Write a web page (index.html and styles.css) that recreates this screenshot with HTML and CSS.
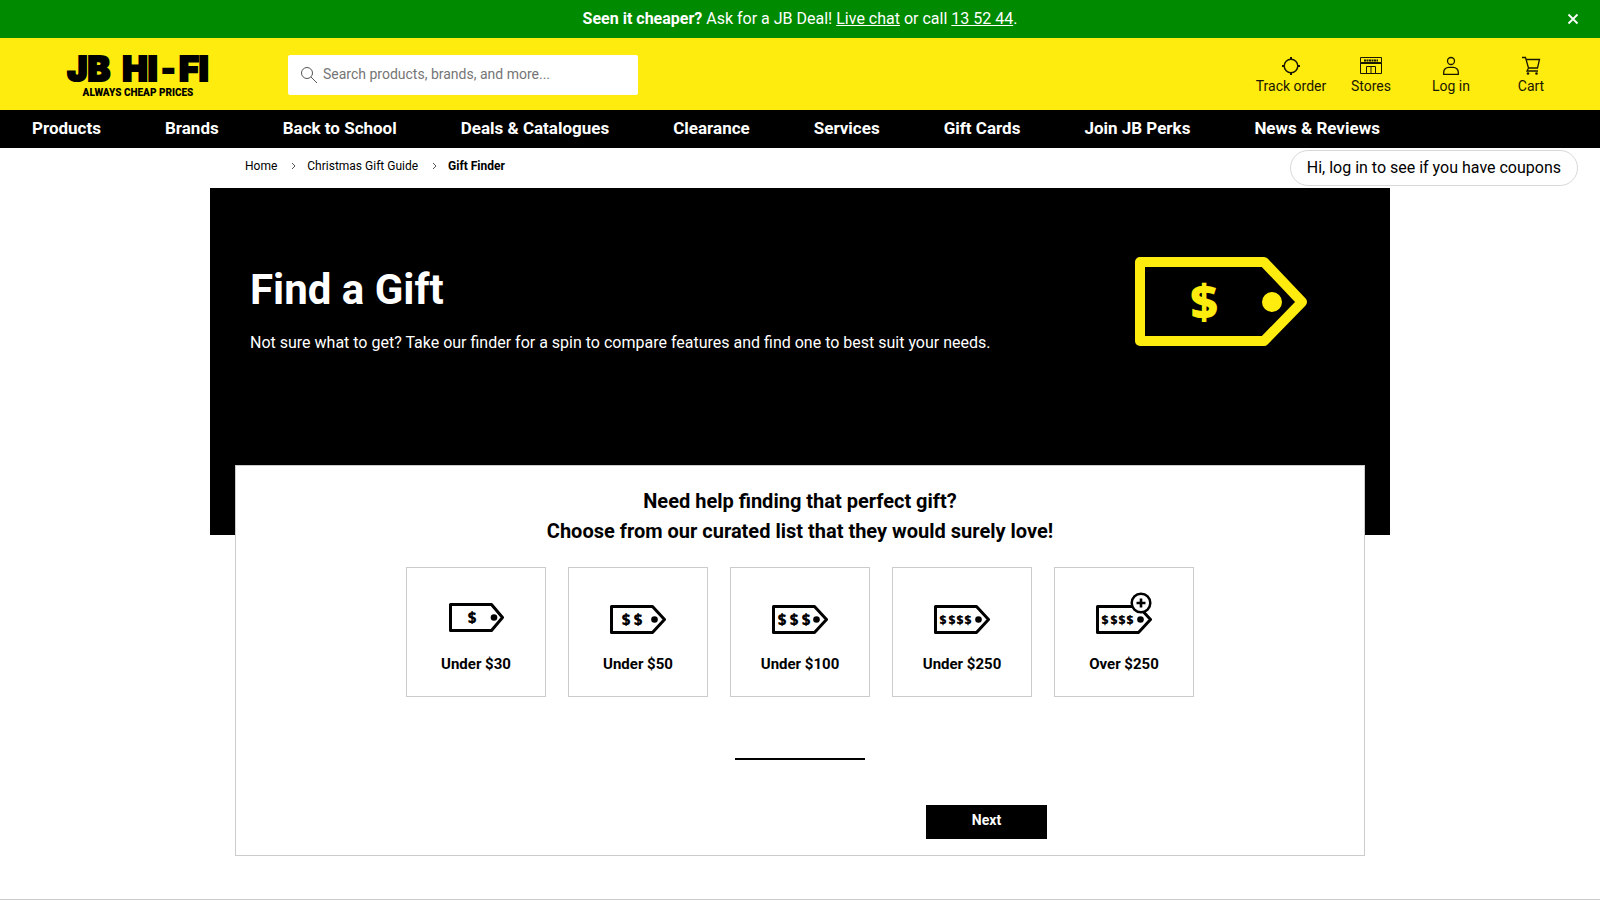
FILE: index.html
```html
<!DOCTYPE html>
<html lang="en">
<head>
    <meta charset="UTF-8">
    <meta name="viewport" content="width=device-width, initial-scale=1">
    <title>Gift Finder | JB Hi-Fi</title>
    <link rel="stylesheet" href="styles.css">
</head>
<body>
    <div class="promo">
        <p class="promo-text"><strong>Seen it cheaper?</strong> Ask for a JB Deal! <a href="#">Live chat</a> or call <a href="tel:135244">13 52 44</a>.</p>
        <button class="promo-close" type="button" aria-label="Close">
            <svg width="12" height="12" viewBox="0 0 12 12"><path d="M1.500 1.500l9 9M10.500 1.500l-9 9" fill="none" stroke="#fff" stroke-width="1.800"/></svg>
        </button>
    </div>

    <header class="header">
        <a class="logo" href="#">
            <span class="logo-name"><span>JB</span> <span>HI<span class="logo-dash">-</span>FI</span></span>
            <span class="logo-tag">ALWAYS CHEAP PRICES</span>
        </a>
        <form class="search">
            <svg width="18" height="18" viewBox="0 0 18 18"><g fill="none" stroke="#555"><circle cx="7" cy="7" r="5.500"/><path d="M11 11l6 6"/></g></svg>
            <input type="text" aria-label="Search" placeholder="Search products, brands, and more...">
        </form>
        <div class="tools">
            <a class="tool" href="#">
                <svg width="20" height="20" viewBox="0 0 20 20"><g fill="none" stroke="#1a1700" stroke-width="1.500"><circle cx="10" cy="10" r="6.800"/><path d="M10 1v3M10 16v3M1 10h3M16 10h3" stroke-width="2"/></g></svg>
                Track order
            </a>
            <a class="tool" href="#">
                <svg width="24" height="20" viewBox="0 0 24 20"><g fill="none" stroke="#1a1700"><path d="M1.500 1.500h21v5h-21zM1.500 6.500v11h21v-11M1 7.500h22M7.500 17.500v-7h9v7M12 10.500v7"/><path d="M5 4.500h14" stroke-width="2" stroke-dasharray="2 .5"/></g></svg>
                Stores
            </a>
            <a class="tool" href="#">
                <svg width="20" height="20" viewBox="0 0 20 20"><g fill="none" stroke="#1a1700" stroke-width="1.300"><circle cx="10" cy="5" r="3.500"/><path d="M2.700 18.300v-2a5 5 0 0 1 5-5h4.600a5 5 0 0 1 5 5v2z"/></g></svg>
                Log in
            </a>
            <a class="tool" href="#">
                <svg width="20" height="20" viewBox="0 0 20 20"><g fill="none" stroke="#1a1700" stroke-width="1.300"><path d="M1 1.500h3.500l3 10.500h9.500M5 3.500h13.500l-2 8.500M7.500 12l-1.500 3h11"/></g><circle cx="7" cy="17.500" r="1.300" fill="#1a1700"/><circle cx="15.500" cy="17.500" r="1.300" fill="#1a1700"/></svg>
                Cart
            </a>
        </div>
    </header>

    <nav class="menu">
        <a href="#">Products</a>
        <a href="#">Brands</a>
        <a href="#">Back to School</a>
        <a href="#">Deals &amp; Catalogues</a>
        <a href="#">Clearance</a>
        <a href="#">Services</a>
        <a href="#">Gift Cards</a>
        <a href="#">Join JB Perks</a>
        <a href="#">News &amp; Reviews</a>
        <a class="coupon" href="#">Hi, log in to see if you have coupons</a>
    </nav>

    <main class="main">
        <nav class="crumbs" aria-label="Breadcrumb">
            <a href="#">Home</a>
            <svg width="5" height="8" viewBox="0 0 5 8"><path d="M1 1l3 3-3 3" fill="none" stroke="#555"/></svg>
            <a href="#">Christmas Gift Guide</a>
            <svg width="5" height="8" viewBox="0 0 5 8"><path d="M1 1l3 3-3 3" fill="none" stroke="#555"/></svg>
            <strong>Gift Finder</strong>
        </nav>

        <section class="hero">
            <div class="hero-text">
                <h1>Find a Gift</h1>
                <p>Not sure what to get? Take our finder for a spin to compare features and find one to best suit your needs.</p>
            </div>
            <svg class="hero-tag" width="173" height="90" viewBox="0 0 173 90">
                <path d="M5 6h124l38 40-38 39H5z" fill="none" stroke="#ffec0f" stroke-width="10" stroke-linejoin="round"/>
                <circle cx="137" cy="46" r="10" fill="#ffec0f"/>
                <text class="dollar" x="69" y="63" font-size="48" fill="#ffec0f">$</text>
            </svg>
        </section>

        <section class="finder">
            <h2>Need help finding that perfect gift?<br>Choose from our curated list that they would surely love!</h2>
            <div class="options">
                <button class="option" type="button">
                    <svg width="56" height="56" viewBox="0 0 56 56">
                        <path class="tag" d="M2.500 25.500h41l11 13-11 13h-41z"/>
                        <circle cx="46" cy="38.500" r="3.300"/>
                        <text class="dollar" x="24" y="44" font-size="15">$</text>
                    </svg>
                    Under $30
                </button>
                <button class="option" type="button">
                    <svg width="56" height="56" viewBox="0 0 56 56">
                        <path class="tag" d="M1.500 27.500h41l12 13-12 13h-41z"/>
                        <circle cx="44.500" cy="40.500" r="3.300"/>
                        <text class="dollar" x="16" y="46" font-size="15">$</text>
                        <text class="dollar" x="28" y="46" font-size="15">$</text>
                    </svg>
                    Under $50
                </button>
                <button class="option" type="button">
                    <svg width="56" height="56" viewBox="0 0 56 56">
                        <path class="tag" d="M1.500 27.500h41l12 13-12 13h-41z"/>
                        <circle cx="44.500" cy="40.500" r="3.300"/>
                        <text class="dollar" x="10" y="46" font-size="15">$</text>
                        <text class="dollar" x="22" y="46" font-size="15">$</text>
                        <text class="dollar" x="34" y="46" font-size="15">$</text>
                    </svg>
                    Under $100
                </button>
                <button class="option" type="button">
                    <svg width="56" height="56" viewBox="0 0 56 56">
                        <path class="tag" d="M1.500 27.500h41l12 13-12 13h-41z"/>
                        <circle cx="44.500" cy="40.500" r="3.300"/>
                        <text class="dollar" x="9" y="45" font-size="12">$</text>
                        <text class="dollar" x="18" y="45" font-size="12">$</text>
                        <text class="dollar" x="26" y="45" font-size="12">$</text>
                        <text class="dollar" x="34" y="45" font-size="12">$</text>
                    </svg>
                    Under $250
                </button>
                <button class="option" type="button">
                    <svg width="56" height="56" viewBox="0 0 56 56">
                        <path class="tag" d="M1.500 27.500h41l12 13-12 13h-41z"/>
                        <circle cx="44.500" cy="40.500" r="3.300"/>
                        <text class="dollar" x="9" y="45" font-size="12">$</text>
                        <text class="dollar" x="18" y="45" font-size="12">$</text>
                        <text class="dollar" x="26" y="45" font-size="12">$</text>
                        <text class="dollar" x="34" y="45" font-size="12">$</text>
                        <circle cx="45" cy="24" r="9.300" fill="#fff" stroke="#000" stroke-width="2.500"/>
                        <path d="M45 19.500v9M40.500 24h9" stroke="#000" stroke-width="2.600"/>
                    </svg>
                    Over $250
                </button>
            </div>
            <div class="progress"></div>
            <div class="actions">
                <button class="next" type="button">Next</button>
            </div>
        </section>
    </main>

    <footer class="footer"></footer>
</body>
</html>
```
FILE: styles.css
```css
* {
    box-sizing: border-box;
}
body {
    margin: 0;
    font-family: Roboto, "Liberation Sans", sans-serif;
    font-size: 16px;
    color: #000;
    background-color: #fff;
    overflow-x: hidden;
}
a {
    color: inherit;
    text-decoration: none;
}
button {
    font-family: inherit;
    cursor: pointer;
}
svg {
    flex-shrink: 0;
}

/* top bar */
.promo {
    display: flex;
    align-items: center;
    padding: 0 18px;
    height: 38px;
    background-color: #008a00;
    color: #fff;
}
.promo-text {
    flex: 1;
    margin: 0;
    padding: 0 0 2px 18px;
    text-align: center;
}
.promo-text a {
    text-decoration: underline;
}
.promo-close {
    display: flex;
    padding: 3px;
    border: 0;
    background: none;
}

.header {
    display: flex;
    align-items: center;
    padding: 2px 29px 0 64px;
    height: 72px;
    background-color: #ffec0f;
}
.logo {
    display: flex;
    flex-direction: column;
    align-items: center;
    gap: 4px;
    padding-top: 4px;
    width: 148px;
    text-align: center;
}
.logo-name {
    display: flex;
    gap: 12px;
    font-family: Inter, sans-serif;
    font-weight: 900;
    font-size: 34px;
    line-height: 28px;
    white-space: nowrap;
    -webkit-text-stroke: 2px #000;
}
.logo-dash {
    font-family: Roboto, sans-serif;
    margin: 0 3px;
}
.logo-tag {
    font-weight: 900;
    font-size: 10px;
    line-height: 12px;
    white-space: nowrap;
}
.search {
    display: flex;
    align-items: center;
    gap: 5px;
    margin-left: 76px;
    padding: 0 12px;
    width: 350px;
    height: 40px;
    border-radius: 2px;
    background-color: #fff;
}
.search input {
    flex: 1;
    min-width: 0;
    padding: 0 0 2px;
    border: 0;
    outline: 0;
    background: none;
    font-family: inherit;
    font-size: 14px;
}
.search input::placeholder {
    color: #757575;
}
.tools {
    display: flex;
    margin-left: auto;
    padding-top: 2px;
}
.tool {
    display: flex;
    flex-direction: column;
    align-items: center;
    width: 80px;
    font-size: 14px;
    line-height: 20px;
    color: #1a1700;
}

/* main menu */
.menu {
    position: relative;
    display: flex;
    align-items: center;
    gap: 64px;
    padding: 0 32px 2px;
    height: 38px;
    background-color: #000;
    color: #fff;
    font-size: 17px;
    font-weight: 700;
    white-space: nowrap;
}
.coupon {
    position: absolute;
    top: 40px;
    right: 22px;
    padding: 0 16px;
    border: 1px solid #d8d8d8;
    border-radius: 18px;
    background-color: #fff;
    color: #000;
    font-size: 16px;
    font-weight: 400;
    line-height: 34px;
}

.main {
    margin: 0 auto;
    max-width: 1180px;
}
.crumbs {
    display: flex;
    align-items: center;
    gap: 11px;
    padding: 0 35px 4px;
    height: 40px;
    font-size: 12px;
}
.crumbs svg {
    margin-left: 3px;
}
.hero {
    display: flex;
    justify-content: space-between;
    align-items: flex-start;
    padding: 68px 82px 0 40px;
    height: 347px;
    background-color: #000;
    color: #fff;
}
.hero h1 {
    margin: 9px 0 16px;
    font-size: 42px;
    line-height: 50px;
}
.hero p {
    margin: 0;
    line-height: 24px;
}
.dollar {
    font-family: "Open Sans", sans-serif;
    font-weight: 800;
    text-anchor: middle;
}

/* panel sits over the bottom of the hero */
.finder {
    position: relative;
    margin: -70px 25px 0;
    padding: 20px 20px 16px;
    border: 1px solid #ccc;
    background-color: #fff;
    text-align: center;
}
.finder h2 {
    margin: 0 0 21px;
    font-size: 20px;
    line-height: 30px;
}
.options {
    display: flex;
    flex-wrap: wrap;
    justify-content: center;
    gap: 22px;
}
.option {
    display: flex;
    flex-direction: column;
    align-items: center;
    gap: 19px;
    padding: 11px 0 0;
    width: 140px;
    height: 130px;
    border: 1px solid #ccc;
    background-color: #fff;
    color: #000;
    font-size: 15px;
    font-weight: 700;
    line-height: 20px;
}
.tag {
    fill: none;
    stroke: #000;
    stroke-width: 3;
    stroke-linejoin: round;
}
.progress {
    margin: 61px auto 45px;
    width: 130px;
    height: 2px;
    background-color: #000;
}
.actions {
    display: grid;
    grid-template-columns: 121px 121px;
    justify-content: center;
    column-gap: 252px;
}
.next {
    grid-column: 2;
    padding: 0 0 4px;
    height: 34px;
    border: 0;
    background-color: #000;
    color: #fff;
    font-size: 14px;
    font-weight: 700;
}
.footer {
    margin-top: 43px;
    border-top: 1px solid #ccc;
}
```
